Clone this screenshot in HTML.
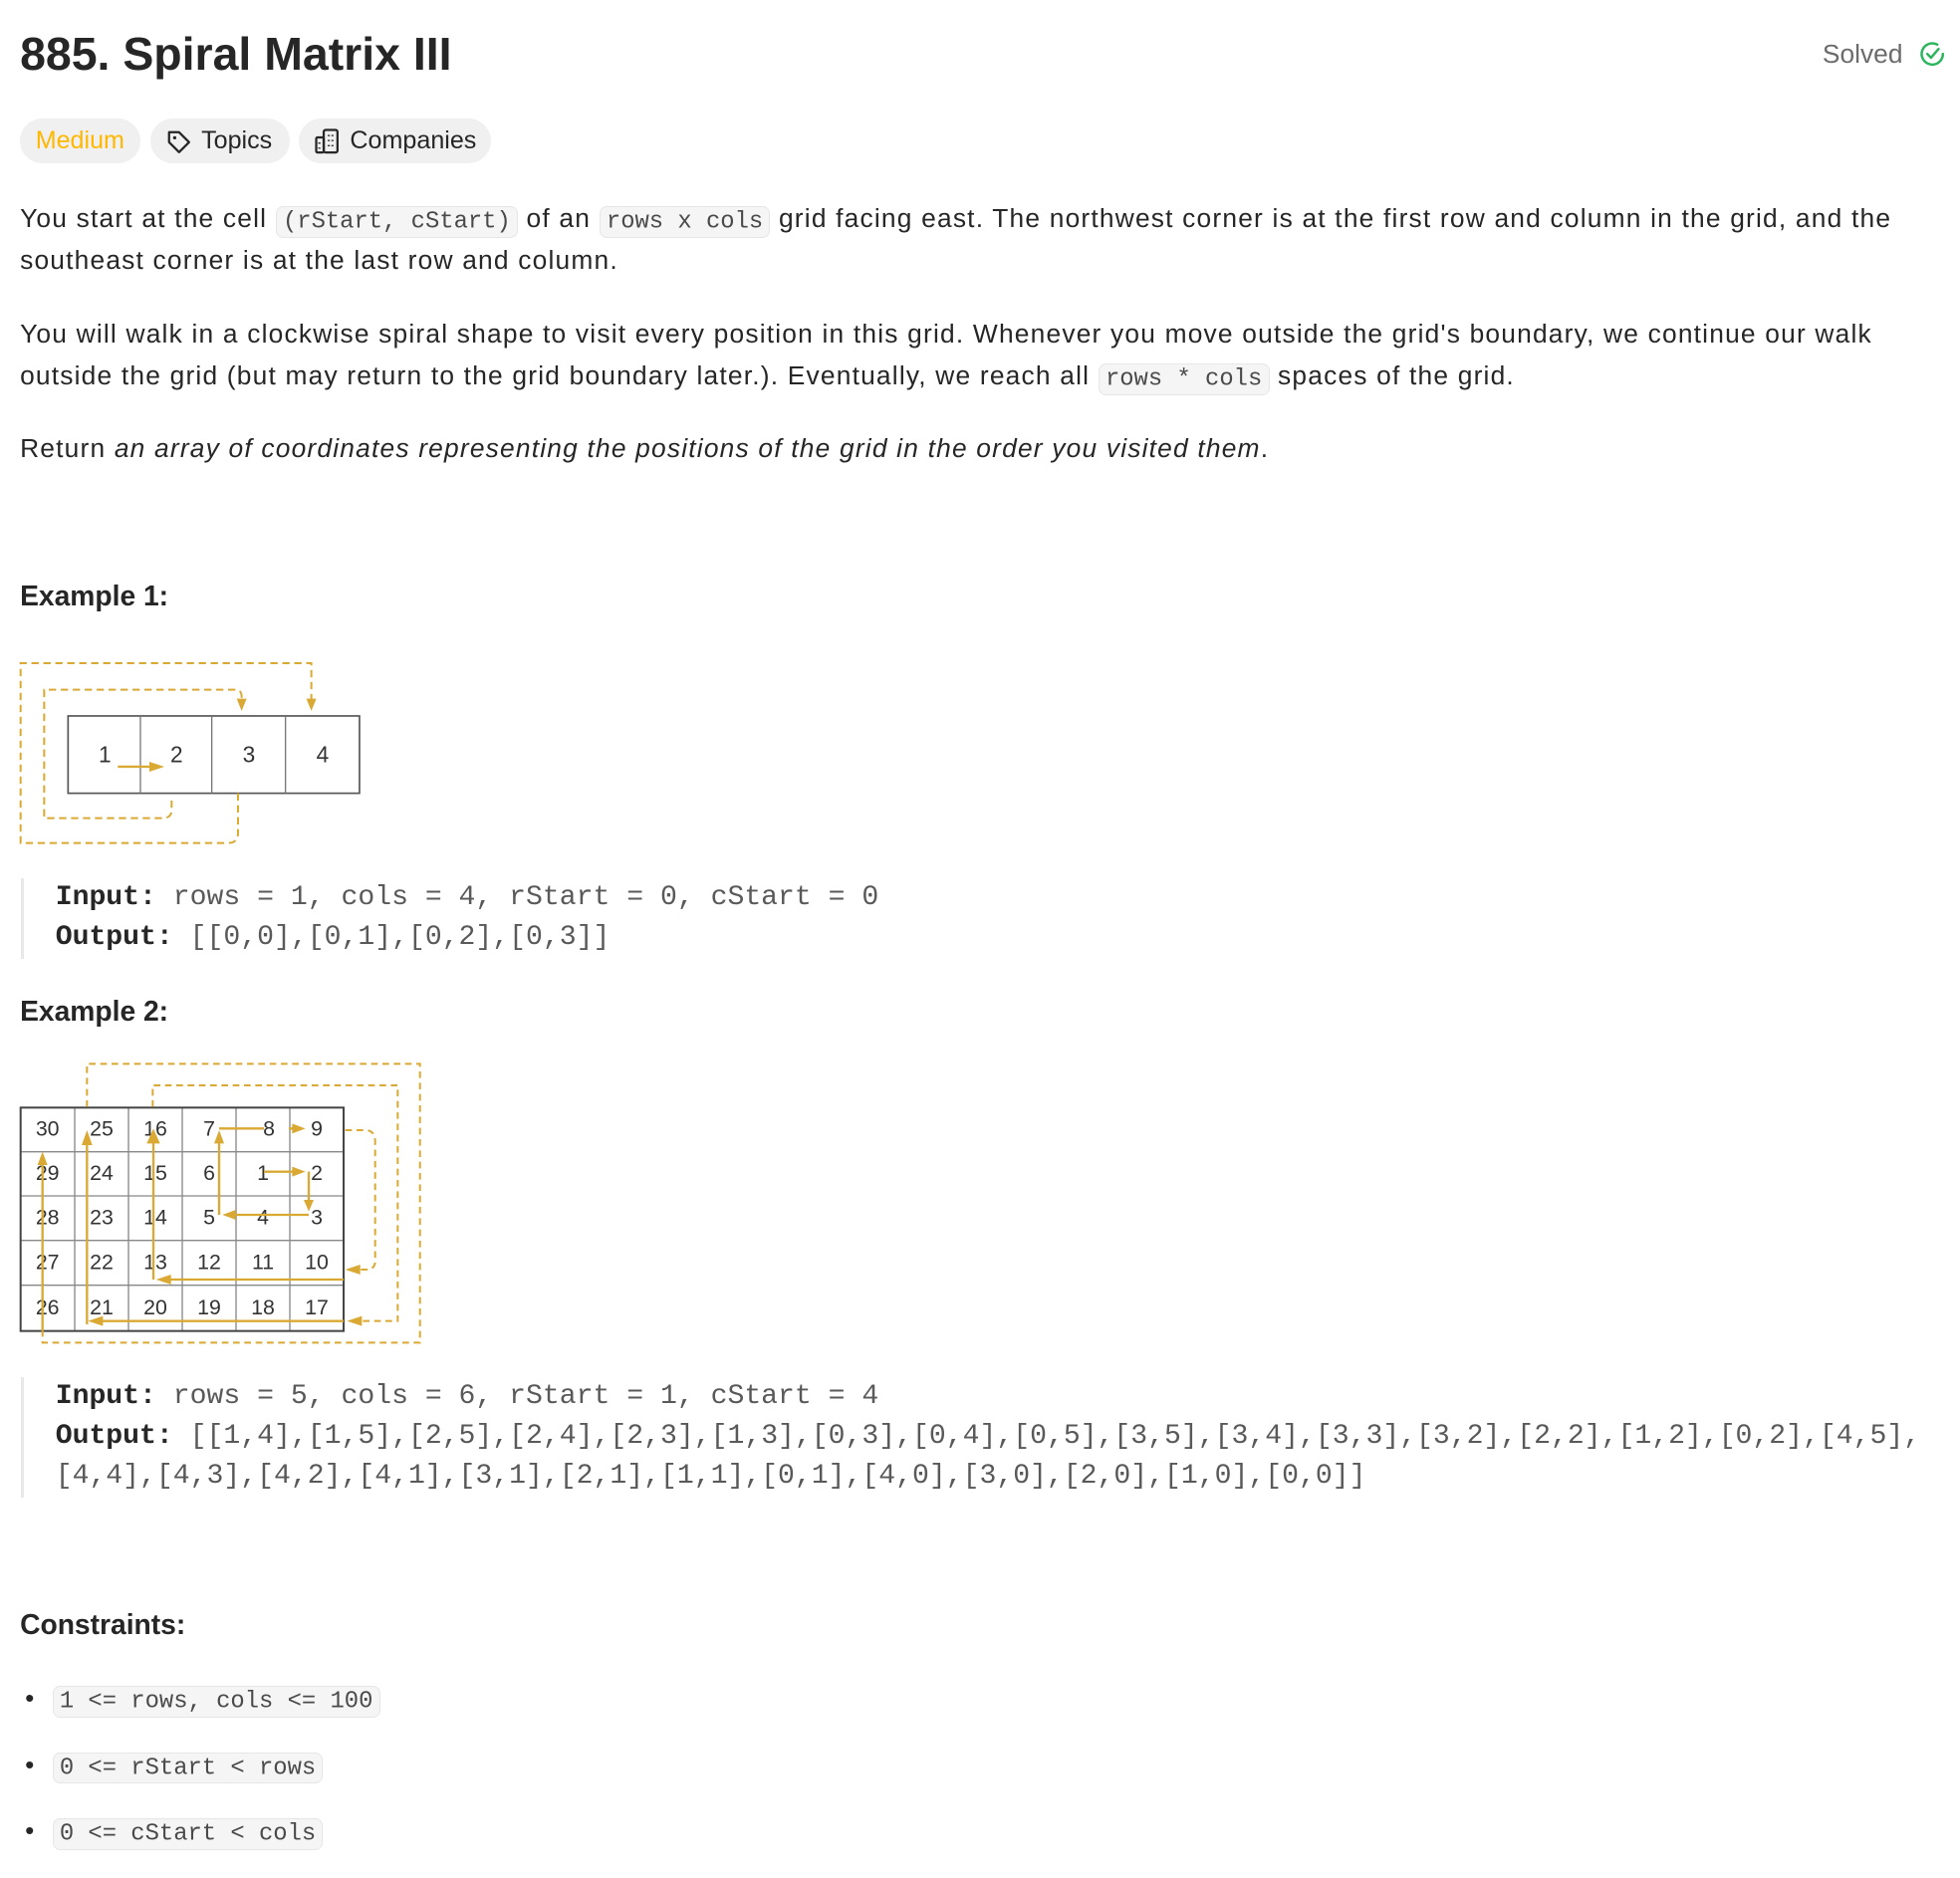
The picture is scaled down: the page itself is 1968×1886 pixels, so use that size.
<!DOCTYPE html>
<html><head><meta charset="utf-8"><style>
html,body{margin:0;padding:0;background:#fff;}
#w{zoom:1.2551;position:relative;width:1568px;height:1503px;overflow:hidden;font-family:"Liberation Sans",sans-serif;color:#262626;}
.a{position:absolute;white-space:nowrap;}
.t{font-size:21px;line-height:34px;letter-spacing:0.95px;}
code{font-family:"Liberation Mono",monospace;font-size:19px;letter-spacing:0;background:#f5f5f5;border:1px solid #e6e6e6;border-radius:6px;padding:1px 5px;color:#4a4a4a;}
.pill{position:absolute;top:95px;height:36px;border-radius:18px;background:#f0f0f0;font-size:20px;line-height:36px;color:#262626;}
.pre{position:absolute;left:17px;border-left:3px solid #e8e8e8;padding-left:25px;font-family:"Liberation Mono",monospace;font-size:22.4px;line-height:32px;color:#595959;white-space:pre;}
.pre b{color:#262626;}
h3{margin:0;font-size:22.5px;font-weight:bold;}
</style></head><body><div id="w">
<div class="a" style="left:16px;top:18px;font-size:37px;font-weight:bold;letter-spacing:0;line-height:50px;">885. Spiral Matrix III</div>
<div class="a" style="left:1458px;top:30px;font-size:21px;line-height:26px;color:#6b6b6b;">Solved</div>
<svg class="a" style="left:1535px;top:33px" width="21" height="21" viewBox="0 0 21 21"><path d="M19 10.5A8.5 8.5 0 1 1 14.5 3" fill="none" stroke="#2db55d" stroke-width="2" stroke-linecap="round"/><path d="M6.5 10.5l3 3 6-7" fill="none" stroke="#2db55d" stroke-width="2" stroke-linecap="round" stroke-linejoin="round"/></svg>

<div class="pill" style="left:16px;width:96px;color:#ffb700;text-align:center;">Medium</div>
<div class="pill" style="left:120px;width:112px;"><svg style="position:absolute;left:12px;top:8px" width="22" height="22" viewBox="0 0 22 22"><path d="M3 3h8l8 8-8 8-8-8z" fill="none" stroke="#262626" stroke-width="1.8" stroke-linejoin="round"/><circle cx="7.5" cy="7.5" r="1.3" fill="#262626"/></svg><span style="position:absolute;left:41px">Topics</span></div>
<div class="pill" style="left:239px;width:154px;"><svg style="position:absolute;left:12px;top:7px" width="22" height="22" viewBox="0 0 22 22"><rect x="8" y="2" width="11" height="18" rx="1.5" fill="none" stroke="#262626" stroke-width="1.8"/><rect x="2" y="8" width="6" height="12" rx="1" fill="none" stroke="#262626" stroke-width="1.8"/><path d="M12 6v1M15 6v1M12 10v1M15 10v1M12 14v1M15 14v1M4.5 12v1M4.5 16v1" stroke="#262626" stroke-width="1.8"/></svg><span style="position:absolute;left:41px">Companies</span></div>

<div class="a t" style="left:16px;top:158px;">You start at the cell <code>(rStart, cStart)</code> of an <code>rows x cols</code> grid facing east. The northwest corner is at the first row and column in the grid, and the</div>
<div class="a t" style="left:16px;top:191px;">southeast corner is at the last row and column.</div>
<div class="a t" style="left:16px;top:250px;">You will walk in a clockwise spiral shape to visit every position in this grid. Whenever you move outside the grid's boundary, we continue our walk</div>
<div class="a t" style="left:16px;top:284px;">outside the grid (but may return to the grid boundary later.). Eventually, we reach all <code>rows * cols</code> spaces of the grid.</div>
<div class="a t" style="left:16px;top:342px;">Return <i>an array of coordinates representing the positions of the grid in the order you visited them</i>.</div>

<div class="a" style="left:16px;top:464px;"><h3>Example 1:</h3></div>
<svg class="a" style="left:0;top:517.9px" width="334.6" height="254.9" viewBox="0 0 1260 960">
<g fill="none" stroke="#555" stroke-width="5"><rect x="205" y="207" width="878" height="233"/><path d="M423 207v233M638 207v233M860 207v233" stroke="#777" stroke-width="4"/></g>
<g font-family="Liberation Sans,sans-serif" font-size="68" fill="#333" text-anchor="middle"><text x="316" y="346">1</text><text x="532" y="346">2</text><text x="750" y="346">3</text><text x="972" y="346">4</text></g>
<g fill="none" stroke="#d9a933" stroke-width="6" stroke-dasharray="22 14"><path d="M717 440V560Q717 590 687 590H62V48H938V160"/><path d="M517 462V490Q517 515 490 515H133V128H710Q728 128 728 150V160"/></g>
<path d="M355 360H460" stroke="#d9a933" stroke-width="7"/>
<g fill="#d9a933"><path d="M450 345L495 360L450 375Z"/><path d="M923 155L953 155L938 192Z"/><path d="M713 155L743 155L728 192Z"/></g>
</svg>
<div class="pre" style="top:703px;"><b>Input:</b> rows = 1, cols = 4, rStart = 0, cStart = 0
<b>Output:</b> [[0,0],[0,1],[0,2],[0,3]]</div>

<div class="a" style="left:16px;top:796px;"><h3>Example 2:</h3></div>
<svg class="a" style="left:0;top:836.6px" width="398.4" height="270.9" viewBox="0 0 1500 1020">
<g fill="none" stroke="#888" stroke-width="4"><path d="M225 187v673M387 187v673M549 187v673M711 187v673M873 187v673M62 320h973M62 453h973M62 587h973M62 722h973"/></g>
<rect x="62" y="187" width="973" height="673" fill="none" stroke="#444" stroke-width="6"/>
<g font-family="Liberation Sans,sans-serif" font-size="64" fill="#333" text-anchor="middle">
<text x="143" y="272">30</text><text x="306" y="272">25</text><text x="468" y="272">16</text><text x="630" y="272">7</text><text x="810" y="272">8</text><text x="954" y="272">9</text>
<text x="143" y="405">29</text><text x="306" y="405">24</text><text x="468" y="405">15</text><text x="630" y="405">6</text><text x="792" y="405">1</text><text x="954" y="405">2</text>
<text x="143" y="538">28</text><text x="306" y="538">23</text><text x="468" y="538">14</text><text x="630" y="538">5</text><text x="792" y="538">4</text><text x="954" y="538">3</text>
<text x="143" y="673">27</text><text x="306" y="673">22</text><text x="468" y="673">13</text><text x="630" y="673">12</text><text x="792" y="673">11</text><text x="954" y="673">10</text>
<text x="143" y="810">26</text><text x="306" y="810">21</text><text x="468" y="810">20</text><text x="630" y="810">19</text><text x="792" y="810">18</text><text x="954" y="810">17</text></g>
<g fill="none" stroke="#d9a933" stroke-width="7"><path d="M795 380H890M930 380V470M930 510H700M660 510V290M660 250H795M870 250H895M1035 705H500M462 705V290M1035 830H300M262 840V290M128 860V350"/></g>
<g fill="none" stroke="#d9a933" stroke-width="6" stroke-dasharray="20 14"><path d="M1040 255H1100Q1130 255 1130 290V650Q1130 675 1100 675H1080M460 185V120H1198V830H1085M262 185V55H1265V895H128V860"/></g>
<g fill="#d9a933"><path d="M880 365L920 380L880 395Z"/><path d="M915 465L945 465L930 500Z"/><path d="M710 495L670 510L710 525Z"/><path d="M645 295L660 255L675 295Z"/><path d="M880 235L920 250L880 265Z"/><path d="M1085 660L1040 675L1085 690Z"/><path d="M515 690L470 705L515 720Z"/><path d="M442 295L462 250L482 295Z"/><path d="M1090 815L1045 830L1090 845Z"/><path d="M310 815L265 830L310 845Z"/><path d="M246 300L262 255L278 300Z"/><path d="M113 360L128 320L143 360Z"/></g>
</svg>
<div class="pre" style="top:1102px;"><b>Input:</b> rows = 5, cols = 6, rStart = 1, cStart = 4
<b>Output:</b> [[1,4],[1,5],[2,5],[2,4],[2,3],[1,3],[0,3],[0,4],[0,5],[3,5],[3,4],[3,3],[3,2],[2,2],[1,2],[0,2],[4,5],
[4,4],[4,3],[4,2],[4,1],[3,1],[2,1],[1,1],[0,1],[4,0],[3,0],[2,0],[1,0],[0,0]]</div>

<div class="a" style="left:16px;top:1287px;"><h3>Constraints:</h3></div>
<div class="a t" style="left:20px;top:1342px;">•&nbsp;&nbsp;<code>1 &lt;= rows, cols &lt;= 100</code></div>
<div class="a t" style="left:20px;top:1395px;">•&nbsp;&nbsp;<code>0 &lt;= rStart &lt; rows</code></div>
<div class="a t" style="left:20px;top:1448px;">•&nbsp;&nbsp;<code>0 &lt;= cStart &lt; cols</code></div>
</div></body></html>
